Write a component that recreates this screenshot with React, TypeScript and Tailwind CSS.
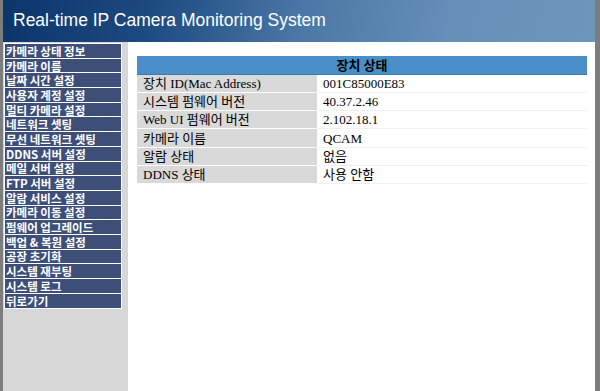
import React from 'react';

const menu = [
  '카메라 상태 정보',
  '카메라 이름',
  '날짜 시간 설정',
  '사용자 계정 설정',
  '멀티 카메라 설정',
  '네트워크 셋팅',
  '무선 네트워크 셋팅',
  'DDNS 서버 설정',
  '메일 서버 설정',
  'FTP 서버 설정',
  '알람 서비스 설정',
  '카메라 이동 설정',
  '펌웨어 업그레이드',
  '백업 & 복원 설정',
  '공장 초기화',
  '시스템 재부팅',
  '시스템 로그',
  '뒤로가기',
];

const rows: [string, string][] = [
  ['장치 ID(Mac Address)', '001C85000E83'],
  ['시스템 펌웨어 버전', '40.37.2.46'],
  ['Web UI 펌웨어 버전', '2.102.18.1'],
  ['카메라 이름', 'QCAM'],
  ['알람 상태', '없음'],
  ['DDNS 상태', '사용 안함'],
];

export default function App() {
  return (
    <div className="flex h-[391px] w-[600px] flex-col overflow-hidden border-l-[3px] border-r-[5px] border-[#7d7d7d] bg-white">
      <div className="flex h-[42px] shrink-0 items-center bg-[linear-gradient(100deg,#0c356a_0%,#1d4a80_25%,#4a77a5_50%,#658fb7_75%,#6d96bb_100%)] pl-[10px] pb-[2px]">
        <h1 className="font-['Liberation_Sans',Arial,sans-serif] text-[17.5px] text-white">
          Real-time IP Camera Monitoring System
        </h1>
      </div>

      <div className="flex flex-1">
        <div className="w-[125px] shrink-0 bg-[#d7d7d7] pl-[1px] pt-[1px]">
          <div className="w-[118px] border border-white bg-white">
            {menu.map((m, i) => (
              <div
                key={m}
                className={`flex h-[14.7px] items-center whitespace-nowrap bg-[#3d4e78] pl-[1px] font-['Noto_Sans_CJK_KR','Liberation_Sans',sans-serif] text-[11.5px] font-bold leading-[12px] text-white ${
                  i < menu.length - 1 ? 'border-b border-white' : ''
                }`}
              >
                {m}
              </div>
            ))}
          </div>
        </div>

        <div className="flex-1 pl-[9px] pt-[14px]">
          <table className="w-[450px] border-collapse font-['Liberation_Serif','Noto_Sans_CJK_KR',serif] text-[13px] text-black">
            <thead>
              <tr>
                <th
                  colSpan={2}
                  className="h-[18px] border-b border-[#3b7ab0] bg-[#4a8fc7] p-0 text-center font-['Noto_Sans_CJK_KR',sans-serif] text-[13px] font-bold leading-none"
                >
                  장치 상태
                </th>
              </tr>
            </thead>
            <tbody>
              {rows.map(([k, v]) => (
                <tr key={k} className="h-[18.3px]">
                  <td className="w-[180px] border-b border-white bg-[#d9d9d9] py-0 pl-[6px] leading-none">
                    {k}
                  </td>
                  <td className="border-b border-[#f0f0f0] py-0 pl-[6px] leading-none">{v}</td>
                </tr>
              ))}
            </tbody>
          </table>
        </div>
      </div>
    </div>
  );
}
